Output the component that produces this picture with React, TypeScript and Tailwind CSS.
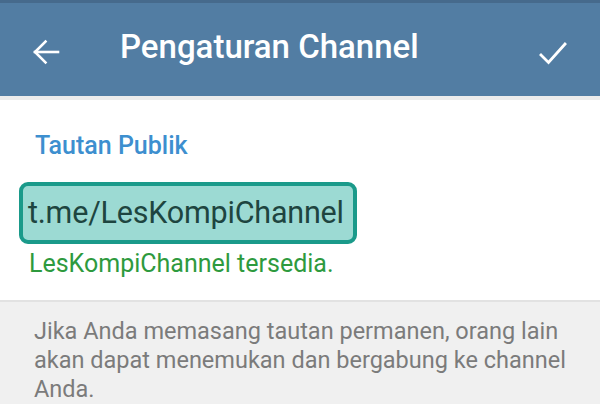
import React from "react";

export default function App() {
  return (
    <div className="w-[600px] h-[404px] overflow-hidden bg-[#f0f0f0] flex flex-col" style={{ fontFamily: "Roboto, 'Noto Sans', sans-serif" }}>
      <div className="h-[3px] bg-[#466a8c]" />
      <div className="h-[93px] bg-[#527da3] flex items-center relative">
        <svg className="absolute left-[32px] top-[35px]" width="28" height="28" viewBox="0 0 28 28" fill="none" stroke="white" strokeWidth="2.6" strokeLinecap="square">
          <path d="M26 14H3" />
          <path d="M13.5 3.5L3 14l10.5 10.5" />
        </svg>
        <div className="absolute left-[120px] top-[24px] text-white text-[33px] font-medium leading-[40px]">Pengaturan Channel</div>
        <svg className="absolute left-[538px] top-[37px]" width="30" height="26" viewBox="0 0 30 26" fill="none" stroke="white" strokeWidth="2.8" strokeLinecap="square">
          <path d="M3 15l7.5 7.5L27 4" />
        </svg>
      </div>
      <div className="h-[4px] bg-[#ececec]" />
      <div className="bg-white h-[201px] flex flex-col pt-[31px]">
        <div className="pl-[35px] text-[#3d8fcf] text-[25px] font-medium leading-[30px]">Tautan Publik</div>
        <div className="mt-[21px] ml-[19px] w-[338px] h-[62px] rounded-[9px] border-[4px] border-[#1a9a8a] bg-[#9cdad3] flex items-center pl-[5px]">
          <span className="text-[#1e4540] text-[30.5px] leading-[36px] tracking-[-0.2px]">t.me/LesKompiChannel</span>
        </div>
        <div className="mt-[5px] pl-[29px] text-[#2e9a3e] text-[25px] leading-[30px]">LesKompiChannel tersedia.</div>
      </div>
      <div className="h-[2px] bg-[#e2e2e2]" />
      <div className="pt-[15px] pl-[34px] pr-[30px] text-[#7b7b7b] text-[23.5px] leading-[29px]">
        Jika Anda memasang tautan permanen, orang lain akan dapat menemukan dan bergabung ke channel Anda.
      </div>
    </div>
  );
}
